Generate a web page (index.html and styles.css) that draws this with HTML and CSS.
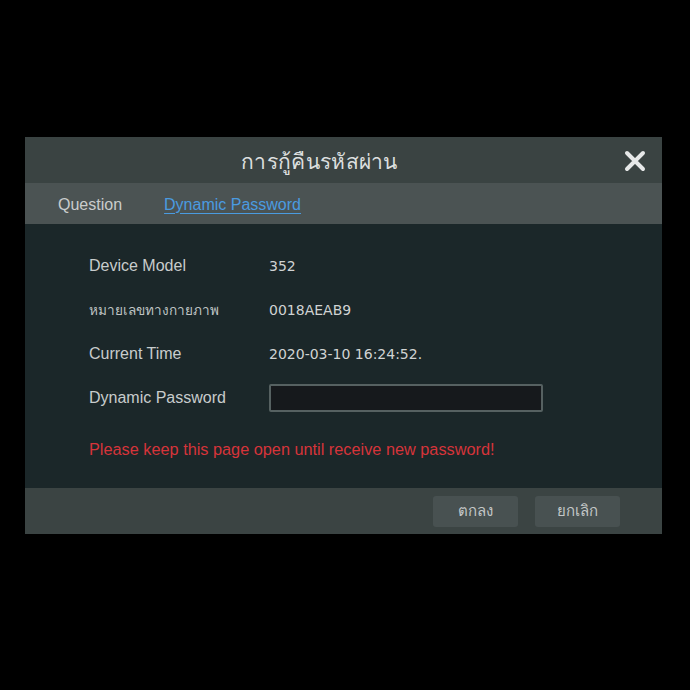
FILE: index.html
```html
<!DOCTYPE html>
<html>
<head>
<meta charset="utf-8">
<link rel="stylesheet" href="styles.css">
</head>
<body>
<div class="dialog">
  <div class="titlebar">
    <span class="title">การกู้คืนรหัสผ่าน</span>
    <span class="close">
      <svg width="22" height="22" viewBox="0 0 22 22"><path d="M3 3 L19 19 M19 3 L3 19" stroke="#e6e8e8" stroke-width="4" stroke-linecap="round"/></svg>
    </span>
  </div>
  <div class="tabs">
    <span class="tab">Question</span>
    <span class="tab active">Dynamic Password</span>
  </div>
  <div class="content">
    <div class="row">
      <span class="label">Device Model</span>
      <span class="value">352</span>
    </div>
    <div class="row">
      <span class="label thai">หมายเลขทางกายภาพ</span>
      <span class="value">0018AEAB9</span>
    </div>
    <div class="row">
      <span class="label">Current Time</span>
      <span class="value">2020-03-10 16:24:52.</span>
    </div>
    <div class="row">
      <span class="label">Dynamic Password</span>
      <span class="input"></span>
    </div>
    <div class="warn">Please keep this page open until receive new password!</div>
  </div>
  <div class="footer">
    <span class="btn">ตกลง</span>
    <span class="btn">ยกเลิก</span>
  </div>
</div>
</body>
</html>
```
FILE: styles.css
```css
html, body {
  margin: 0;
  padding: 0;
  background: #000;
  width: 690px;
  height: 690px;
  font-family: "Liberation Sans", "Noto Sans", sans-serif;
}
body {
  padding-top: 137px;
  box-sizing: border-box;
}
.dialog {
  margin-left: 25px;
  width: 637px;
  display: flex;
  flex-direction: column;
}
.titlebar {
  height: 46px;
  background: #3a4342;
  display: flex;
  align-items: center;
  justify-content: center;
  padding-right: 48px;
  padding-top: 3px;
  box-sizing: border-box;
  position: relative;
}
.title {
  color: #dcdfdf;
  font-size: 21px;
  letter-spacing: 0.3px;
}
.close {
  position: absolute;
  right: 16px;
  top: 13px;
  display: flex;
}
.tabs {
  height: 41px;
  background: #4b5353;
  display: flex;
  align-items: center;
  padding-left: 33px;
  padding-top: 4px;
  box-sizing: border-box;
  gap: 42px;
}
.tab {
  color: #c9cccc;
  font-size: 16px;
  padding-bottom: 2px;
}
.tab.active {
  color: #4a9be0;
  text-decoration: underline;
  text-underline-offset: 3px;
}
.content {
  height: 264px;
  background: #1b2729;
  box-sizing: border-box;
  padding: 20px 0 0 64px;
  display: flex;
  flex-direction: column;
}
.row {
  display: flex;
  align-items: center;
  height: 44px;
}
.label {
  width: 180px;
  color: #c8cccc;
  font-size: 16px;
}
.label.thai {
  font-size: 13.6px;
  color: #bfc3c3;
}
.value {
  color: #d0d3d3;
  font-family: "DejaVu Sans", sans-serif;
  font-size: 14px;
  white-space: nowrap;
}
.input {
  width: 270px;
  height: 24px;
  background: #16191c;
  border: 2px solid #566161;
  border-radius: 2px;
}
.warn {
  margin-top: 20px;
  color: #d6343a;
  font-size: 16.3px;
}
.footer {
  height: 46px;
  background: #3b4443;
  display: flex;
  align-items: center;
  justify-content: flex-end;
  gap: 17px;
  padding-right: 42px;
}
.btn {
  width: 85px;
  height: 31px;
  background: #485151;
  border-radius: 3px;
  color: #c3c7c7;
  font-size: 15px;
  display: flex;
  align-items: center;
  justify-content: center;
}
```
